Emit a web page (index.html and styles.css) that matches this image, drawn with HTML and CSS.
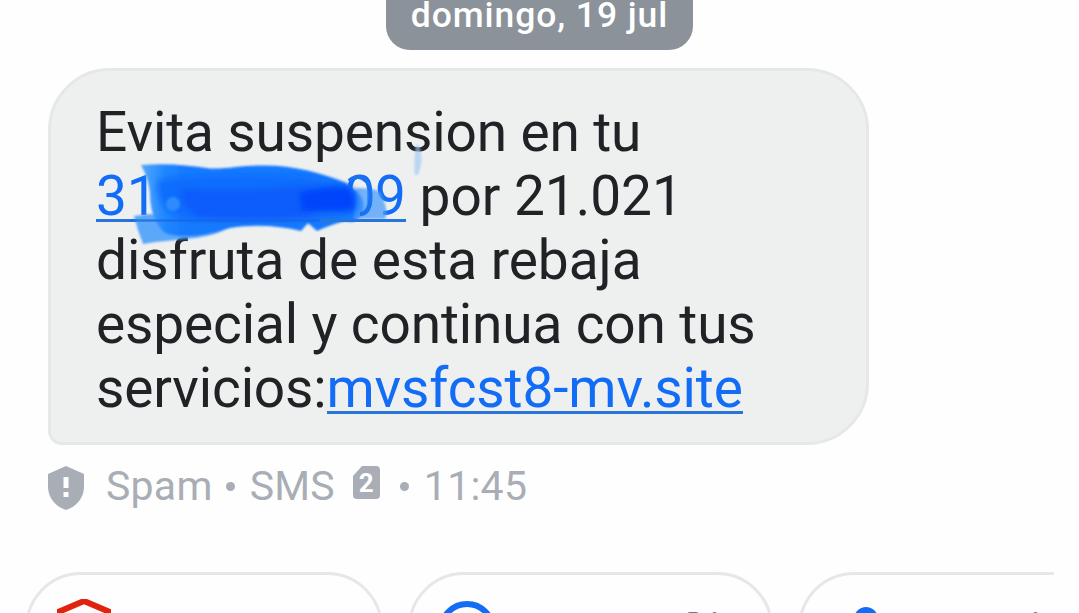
FILE: index.html
```html
<!DOCTYPE html>
<html lang="es">
<head>
<meta charset="utf-8">
<title>Mensajes</title>
<link rel="stylesheet" href="styles.css">
</head>
<body>
<main class="thread">
  <div class="date">domingo, 19 jul</div>
  <div class="bubble">
    <p class="line wide">Evita suspension en tu</p>
    <p class="line"><a class="link phone"><span>31</span><span>09</span></a> por 21.021</p>
    <p class="line">disfruta de esta rebaja</p>
    <p class="line wide">especial y continua con tus</p>
    <p class="line wide">servicios:<a class="link">mvsfcst8-mv.site</a></p>
    <svg class="marker" viewBox="80 140 360 110" width="360" height="110" aria-hidden="true">
      <defs><filter id="soft" x="-10%" y="-10%" width="120%" height="120%"><feGaussianBlur stdDeviation="1"/></filter>
      <filter id="softer" x="-10%" y="-30%" width="120%" height="160%"><feGaussianBlur stdDeviation="3"/></filter>
      <linearGradient id="wash" gradientUnits="userSpaceOnUse" x1="145" y1="0" x2="185" y2="0"><stop offset="0" stop-color="#4da2fd"/><stop offset=".5" stop-color="#1f87ff"/><stop offset="1" stop-color="#177aff"/></linearGradient></defs>
      <g filter="url(#soft)">
        <path d="M134 216 L150 214 L186 220 H220 L226 229 C215 235 207 236 196 238 C177 240 160 241 143 244 L138 230Z" fill="#4ba0fc" opacity=".9"/>
        <path d="M141 165 C165 163 187 165 210 168.500 C228 169 240 165.500 262 165.500 C292 165 322 173 346 183 C352 188 362 194 363 202 C365 214 361 219 352 222 L345 221 C334 224 325 227 317 231 L308 223 L301 231 C280 226 255 224 230 228 C207 236 181 239 165 233 C154 224 150 208 150 194 C149 183 146 174 141 165Z" fill="url(#wash)"/>
        <path d="M356 188 C373 188 379 190 381 194 C386 204 388 214 385 219 H354Z" fill="#4a9efb" opacity=".75"/>
        <path d="M416 145 Q419 144 420 148 Q424 162 418 175 H415 Q413 164 416 145Z" fill="#9fc8f4" opacity=".65"/>
      </g>
      <g filter="url(#softer)">
        <path d="M158 180 C190 174 264 174 306 176 C332 181 346 184 350 193 L343 216 L310 220 H190 C170 217 155 203 158 180Z" fill="#116dfd"/>
        <path d="M180 189 C224 192 248 190 269 189 C300 186 330 185 348 186 C357 190 360 204 354 212 H320 L310 217 C290 221 235 222 200 218 C190 213 181 202 180 189Z" fill="#075cfc"/>
        <path d="M300 193 C318 188 332 187 348 186 C356 195 357 206 351 211 H302Z" fill="#0344fb"/>
      </g>
      <circle cx="173" cy="204" r="7" fill="#2f8bfd" filter="url(#soft)"/>
      <path d="M349 181 C357 173 371 177 370.500 196 C370.500 208 367 214 360 214" fill="none" stroke="#1872f2" stroke-width="4"/>
      <path d="M130 220.500H320" stroke="#1765d8" stroke-opacity=".7" stroke-width="2"/>
      <path d="M320 220.500H390" stroke="#2874d8" stroke-width="3"/>
    </svg>
  </div>
  <div class="meta">
    <svg class="shield" viewBox="0 0 36 44" width="36" height="44"><path d="M18 0 36 8V21C36 32 28 41 18 44 8 41 0 32 0 21V8Z" fill="#a9adb5"/><path d="M15.500 11h5v11h-5zM15.500 26h5v5h-5z" fill="#fff"/></svg>
    <span class="spam">Spam</span><i class="dot"></i><span class="sms">SMS</span>
    <span class="sim"><svg viewBox="0 0 27 33" width="27" height="33"><path d="M9 0H23Q27 0 27 4V29Q27 33 23 33H4Q0 33 0 29V10Z" fill="#a9adb5"/></svg><b>2</b></span>
    <i class="dot second"></i><span class="time">11:45</span>
  </div>
  <div class="chips">
    <div class="chip first"><svg viewBox="0 0 54 60" width="54" height="60"><path d="M-4 15.300 27 2 58 15.300" fill="none" stroke="#e0230f" stroke-width="6"/></svg></div>
    <div class="chip middle"><svg viewBox="0 0 60 60" width="60" height="60"><circle cx="30" cy="30" r="26" fill="none" stroke="#126cf5" stroke-width="6"/></svg><span class="peek"><i></i><i></i></span></div>
    <div class="chip last"><svg viewBox="0 0 24 24" width="24" height="24"><circle cx="12" cy="12" r="12" fill="#126cf5"/></svg><span class="peek"><i></i></span></div>
  </div>
</main>
</body>
</html>
```
FILE: styles.css
```css
* { box-sizing: border-box; }
body { margin: 0; background: #fefefe; font-family: Roboto, "Liberation Sans", sans-serif; }
.thread { width: 1079px; height: 613px; overflow: hidden; display: flex; flex-direction: column; }
.date { width: 307px; height: 50px; margin-left: 386px; background: #8b929a; border-radius: 0 0 24px 24px; color: #fff; font-size: 35.5px; font-weight: 500; line-height: 31px; letter-spacing: 0.9px; text-align: center; white-space: nowrap; flex: none; }
.bubble { position: relative; flex: none; width: 821px; height: 377px; margin: 18px 0 0 48px; padding: 29px 45px; border: 3px solid #e5e7e9; border-radius: 62px 62px 62px 14px; background: #eef0f0; }
.line { margin: 0; height: 64px; font-size: 55px; line-height: 64px; letter-spacing: -0.04px; color: #202226; white-space: nowrap; }
.wide { letter-spacing: -0.14px; }
.link { color: #126cf5; background: linear-gradient(#2874d8, #2874d8) 0 55px / 100% 3px no-repeat; }
.phone { display: inline-flex; justify-content: space-between; width: 310px; height: 64px; vertical-align: top; }
.marker { position: absolute; left: 29px; top: 69px; }
.meta { display: flex; align-items: center; height: 48px; margin: 17px 0 0 48px; color: #a9adb5; font-size: 41px; line-height: 48px; letter-spacing: 0.25px; white-space: nowrap; flex: none; }
.shield { margin-top: 3px; }
.spam { margin-left: 22px; }
.dot { width: 9px; height: 9px; border-radius: 50%; background: #a9adb5; margin: 0 14px 0 13px; }
.sms { margin-left: 1px; }
.sim { display: grid; width: 27px; height: 33px; margin: -8px 0 0 18px; }
.sim svg, .sim b { grid-area: 1 / 1; }
.sim b { color: #fff; font-size: 26px; line-height: 35px; text-align: center; }
.second { margin: 0 15px 0 20px; }
.chips { display: flex; margin-top: 62px; flex: none; }
.chip { display: flex; justify-content: space-between; align-items: flex-start; height: 112px; border: 3px solid #e5e7e8; border-radius: 56px; flex: none; }
.first { width: 358px; margin-left: 25px; padding: 24px 0 0 29px; }
.middle { width: 365px; margin-left: 25px; padding: 25px 53px 0 26px; }
.last { width: 256px; margin-left: 25px; padding: 32px 16px 0 53px; border-right: 0; border-radius: 56px 0 0 56px; }
.peek { display: flex; gap: 13px; padding-top: 12px; }
.peek i { width: 12px; height: 3px; border-radius: 6px 6px 0 0; background: #777; }
.peek i + i { width: 5px; }
.last .peek { padding-top: 5px; }
.last .peek i { width: 5px; }
```
